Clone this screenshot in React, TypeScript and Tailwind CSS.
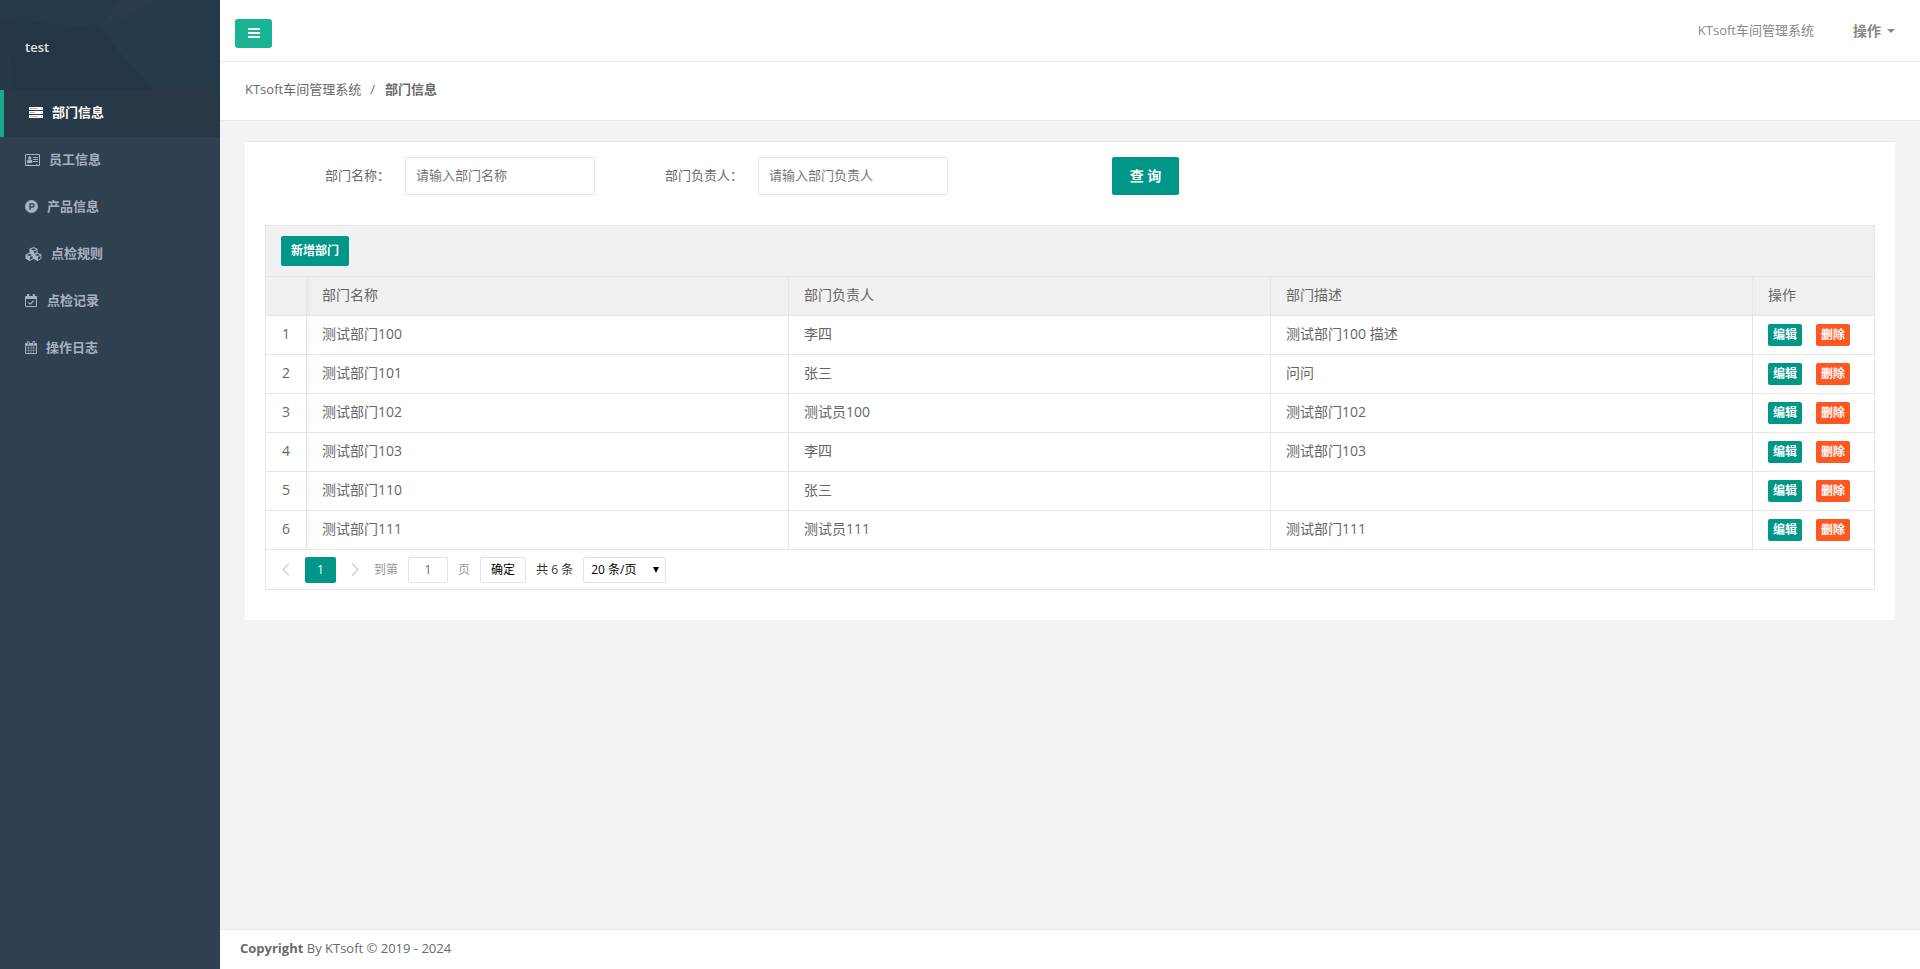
import { useState } from "react";
import type { ReactNode } from "react";

interface Department {
  name: string;
  leader: string;
  description: string;
}

interface MenuItem {
  label: string;
  icon: ReactNode;
}

const departments: Department[] = [
  { name: "测试部门100", leader: "李四", description: "测试部门100 描述" },
  { name: "测试部门101", leader: "张三", description: "问问" },
  { name: "测试部门102", leader: "测试员100", description: "测试部门102" },
  { name: "测试部门103", leader: "李四", description: "测试部门103" },
  { name: "测试部门110", leader: "张三", description: "" },
  { name: "测试部门111", leader: "测试员111", description: "测试部门111" },
];

function ServerIcon() {
  return (
    <svg width="14" height="11" viewBox="0 0 14 11" fill="currentColor" aria-hidden="true">
      <path d="M0 0h14v3H0zM0 4h14v3H0zM0 8h14v3H0z" />
      <path d="M1 1h8v1H1zM1 5h5v1H1zM1 9h8v1H1zM12 1h1v1h-1zM12 5h1v1h-1zM12 9h1v1h-1z" fill="#293846" opacity="0.35" />
    </svg>
  );
}

function AddressCardIcon() {
  return (
    <svg width="15" height="12" viewBox="0 0 15 12" fill="currentColor" aria-hidden="true">
      <path
        fillRule="evenodd"
        d="M1 0h13a1 1 0 0 1 1 1v10a1 1 0 0 1-1 1H1a1 1 0 0 1-1-1V1a1 1 0 0 1 1-1zM1 1v10h1.500v-.7h1.500v.7h7v-.7h1.500v.7H14V1z"
      />
      <circle cx="4.700" cy="4" r="1.700" />
      <path d="M2 9c0-2.500.8-3.500 1.300-3.500.8.600 2 .6 2.800 0 .6 0 1.400 1 1.400 3.500zM8 3h5v1H8zM8 5h5v1H8zM8 7h5v1H8z" />
    </svg>
  );
}

function ProductIcon() {
  return (
    <svg width="13" height="13" viewBox="0 0 13 13" fill="currentColor" aria-hidden="true">
      <path
        fillRule="evenodd"
        d="M6.500 0a6.500 6.500 0 1 1 0 13 6.500 6.500 0 0 1 0-13zM4.400 3.200v6.600h1.300v-2h1.700a2.300 2.300 0 0 0 0-4.600zM5.700 4.500h1.700a1 1 0 0 1 0 2H5.700z"
      />
    </svg>
  );
}

function CubesIcon() {
  return (
    <svg width="17" height="14" viewBox="0 0 17 14" fill="currentColor" aria-hidden="true">
      <path
        fillRule="evenodd"
        d="M8.500 0l4 1.700v4l4 1.800v4.300L12.500 14l-4-2-4 2-4-2.200V7.500l4-1.800v-4zM8.500 1.200L5.900 2.300l2.600 1.100 2.600-1.100zM9 4.300v2.200l2.500-1.100V3.200zM4.500 6.900L1.900 8l2.600 1.100L7.100 8zM5 10v2.600l2.500-1.200V9zM12.500 6.900L9.900 8l2.600 1.100L15.100 8zM13 10v2.600l2.500-1.200V9z"
      />
    </svg>
  );
}

function CalendarCheckIcon() {
  return (
    <svg width="13" height="13" viewBox="0 0 13 13" fill="currentColor" aria-hidden="true">
      <path
        fillRule="evenodd"
        d="M1 2h1V1a1 1 0 0 1 2.200 0v1h3.600V1A1 1 0 0 1 10 1v1h1a1 1 0 0 1 1 1v9a1 1 0 0 1-1 1H1a1 1 0 0 1-1-1V3a1 1 0 0 1 1-1zM1 5v7h10V5z"
      />
      <path d="M3.300 8.300l1.900 1.900 3.600-3.600" fill="none" stroke="currentColor" strokeWidth="1.200" />
    </svg>
  );
}

function CalendarIcon() {
  return (
    <svg width="12" height="13" viewBox="0 0 1664 1792" fill="currentColor" aria-hidden="true">
      <path d="M128 1664h288v-288h-288v288zm352 0h320v-288h-320v288zm-352-352h288v-320h-288v320zm352 0h320v-320h-320v320zm-352-384h288v-288h-288v288zm736 736h320v-288h-320v288zm-384-736h320v-288h-320v288zm768 736h288v-288h-288v288zm-384-352h320v-320h-320v320zm-352-864v-288q0-13-9.500-22.500t-22.500-9.500h-64q-13 0-22.500 9.500t-9.500 22.500v288q0 13 9.500 22.500t22.500 9.500h64q13 0 22.500-9.500t9.500-22.500zm736 864h288v-320h-288v320zm-384-384h320v-288h-320v288zm384 0h288v-288h-288v288zm32-480v-288q0-13-9.500-22.500t-22.500-9.500h-64q-13 0-22.500 9.500t-9.500 22.500v288q0 13 9.500 22.500t22.500 9.500h64q13 0 22.500-9.500t9.500-22.500zm384-64v1280q0 52-38 90t-90 38h-1408q-52 0-90-38t-38-90v-1280q0-52 38-90t90-38h128v-96q0-66 47-113t113-47h64q66 0 113 47t47 113v96h384v-96q0-66 47-113t113-47h64q66 0 113 47t47 113v96h128q52 0 90 38t38 90z" />
    </svg>
  );
}

const menu: MenuItem[] = [
  { label: "部门信息", icon: <ServerIcon /> },
  { label: "员工信息", icon: <AddressCardIcon /> },
  { label: "产品信息", icon: <ProductIcon /> },
  { label: "点检规则", icon: <CubesIcon /> },
  { label: "点检记录", icon: <CalendarCheckIcon /> },
  { label: "操作日志", icon: <CalendarIcon /> },
];

function Sidebar() {
  const [active, setActive] = useState(0);

  return (
    <nav className="w-[220px] shrink-0 bg-[#2f4050]">
      <div className="relative h-[90px] bg-[#263949] px-[25px] pt-[35px]">
        <svg
          className="absolute inset-0 h-full w-full"
          viewBox="0 0 220 90"
          preserveAspectRatio="none"
          aria-hidden="true"
        >
          <path d="M120 0h46L101 27z" fill="#2a3c4b" />
          <path d="M0 19l98 9 56 62H0z" fill="#243646" />
          <path d="M0 42h8l7 48H0z" fill="#263848" />
        </svg>
        <span className="relative block text-[13px] leading-6 font-semibold text-[#dfe4ed]">test</span>
      </div>
      <ul>
        {menu.map((item, i) => (
          <li
            key={item.label}
            className={i === active ? "border-l-4 border-[#19aa8d] bg-[#293846]" : ""}
          >
            <a
              href="#"
              onClick={() => setActive(i)}
              className={`flex h-[47px] items-center gap-[9px] pb-0.5 text-[13px] font-semibold ${
                i === active ? "pl-[25px] text-white" : "pl-[25px] text-[#a7b1c2]"
              }`}
            >
              {item.icon}
              {item.label}
            </a>
          </li>
        ))}
      </ul>
    </nav>
  );
}

function TopBar() {
  return (
    <header className="flex h-[62px] items-center justify-between border-b border-[#e7eaec] bg-white pr-[25px] pl-[15px]">
      <button
        aria-label="菜单"
        className="mt-[5px] flex h-[29px] w-[37px] items-center justify-center rounded-[3px] bg-[#1ab394] text-white"
      >
        <svg width="12" height="10" viewBox="0 0 12 10" fill="currentColor" aria-hidden="true">
          <path d="M0 0h12v2H0zM0 4h12v2H0zM0 8h12v2H0z" />
        </svg>
      </button>
      <div className="flex items-center gap-[39px] text-[13px] text-[#888888]">
        <span>KTsoft车间管理系统</span>
        <button className="flex items-center gap-[6px] text-sm font-semibold text-[#888888]">
          操作
          <svg width="8" height="4" viewBox="0 0 8 4" fill="currentColor" aria-hidden="true">
            <path d="M0 0h8L4 4z" />
          </svg>
        </button>
      </div>
    </header>
  );
}

function SearchForm() {
  const inputClass =
    "h-[38px] w-[190px] rounded-xs border border-[#e6e6e6] bg-white px-[10px] pb-0.5 text-[13px] placeholder:text-[#757575]";

  return (
    <form className="flex h-[38px] items-center" onSubmit={(e) => e.preventDefault()}>
      <label htmlFor="dept-name" className="w-[140px] pr-[15px] text-right">
        部门名称：
      </label>
      <input id="dept-name" placeholder="请输入部门名称" className={inputClass} />
      <label htmlFor="dept-leader" className="w-[163px] pr-[15px] text-right">
        部门负责人：
      </label>
      <input id="dept-leader" placeholder="请输入部门负责人" className={inputClass} />
      <button className="ml-[164px] h-[38px] w-[67px] rounded-xs bg-[#009688] text-sm font-semibold text-white">
        查 询
      </button>
    </form>
  );
}

function DepartmentTable() {
  const cell =
    "h-[39px] border-r border-b border-[#e6e6e6] px-[15px] pb-0.5 text-left font-normal last:border-r-0";
  // the shadow may only fall to the right of the fixed number column
  const numberCell =
    "h-[39px] border-r border-b border-[#e6e6e6] pb-0.5 text-center font-normal shadow-[0_0_8px_rgba(0,0,0,0.08)] [clip-path:inset(0_-10px_0_0)]";
  const rowButton = "h-[22px] w-[34px] rounded-xs text-xs font-semibold text-white";

  return (
    <table className="w-full table-fixed border-separate border-spacing-0 text-sm leading-7">
      <colgroup>
        <col className="w-[41px]" />
        <col />
        <col />
        <col />
        <col className="w-[121px]" />
      </colgroup>
      <thead>
        <tr className="bg-[#f1f1f1]">
          <th className={numberCell} />
          <th className={cell}>部门名称</th>
          <th className={cell}>部门负责人</th>
          <th className={cell}>部门描述</th>
          <th className={cell}>操作</th>
        </tr>
      </thead>
      <tbody>
        {departments.map((dept, i) => (
          <tr key={dept.name}>
            <td className={numberCell}>{i + 1}</td>
            <td className={cell}>{dept.name}</td>
            <td className={cell}>{dept.leader}</td>
            <td className={cell}>{dept.description}</td>
            <td className={cell}>
              <div className="flex gap-[14px] pt-0.5">
                <button className={`${rowButton} bg-[#009688]`}>编辑</button>
                <button className={`${rowButton} bg-[#ff5722]`}>删除</button>
              </div>
            </td>
          </tr>
        ))}
      </tbody>
    </table>
  );
}

function Pagination() {
  return (
    <div className="flex h-[39px] items-center pl-[14px] text-xs text-[#333333]">
      <button aria-label="上一页" className="flex w-3 justify-center text-[#d2d2d2]">
        <svg width="8" height="13" viewBox="0 0 8 13" fill="none" stroke="currentColor" strokeWidth="1.500">
          <path d="M7 .5l-6 6 6 6" />
        </svg>
      </button>
      <button className="ml-[13px] h-[26px] w-[31px] rounded-xs bg-[#009688] text-white">1</button>
      <button aria-label="下一页" className="ml-[13px] flex w-3 justify-center text-[#d2d2d2]">
        <svg width="8" height="13" viewBox="0 0 8 13" fill="none" stroke="currentColor" strokeWidth="1.500">
          <path d="M1 .5l6 6-6 6" />
        </svg>
      </button>
      <label htmlFor="page-no" className="ml-[13px] text-[#999999]">
        到第
      </label>
      <input
        id="page-no"
        defaultValue="1"
        className="mx-[10px] h-[26px] w-10 rounded-xs border border-[#e2e2e2] bg-white text-center text-[#666666]"
      />
      <span className="text-[#999999]">页</span>
      <button className="ml-[10px] h-[26px] w-[46px] rounded-xs border border-[#e2e2e2] bg-white text-black">
        确定
      </button>
      <span className="ml-[10px]">共 6 条</span>
      <div className="relative ml-[10px]">
        <select
          aria-label="每页条数"
          className="h-[26px] w-[83px] appearance-none rounded-xs border border-[#e2e2e2] bg-white pl-[7px] text-black"
        >
          <option>20 条/页</option>
          <option>50 条/页</option>
        </select>
        <svg className="absolute top-[10px] right-[7px]" width="6" height="6" viewBox="0 0 6 6">
          <path d="M0 0h6L3 6z" />
        </svg>
      </div>
    </div>
  );
}

export default function App() {
  return (
    <div className="flex min-h-screen bg-[#f3f3f4] font-['Open_Sans','Noto_Sans_CJK_SC',sans-serif] text-[13px] text-[#676a6c]">
      <Sidebar />
      <div className="flex min-w-0 flex-1 flex-col">
        <TopBar />
        <div className="flex h-[59px] items-center border-b border-[#e7eaec] bg-white px-[25px] pb-0.5">
          <a href="#">KTsoft车间管理系统</a>
          <span className="px-[9px]">/</span>
          <strong className="pl-px font-semibold">部门信息</strong>
        </div>
        <main className="flex-1 px-[25px] py-5">
          <section className="border-t border-[#e7eaec] bg-white px-5 pt-[15px] pb-[30px]">
            <SearchForm />
            <div className="mt-[30px] border border-[#e6e6e6] text-[#666666]">
              <div className="flex h-[51px] items-center border-b border-[#e6e6e6] bg-[#f1f1f1] px-[15px]">
                <button className="h-[30px] w-[68px] rounded-xs bg-[#009688] text-xs font-semibold text-white">
                  新增部门
                </button>
              </div>
              <DepartmentTable />
              <Pagination />
            </div>
          </section>
        </main>
        <footer className="border-t border-[#e7eaec] bg-white px-5 pt-2 pb-[11px] leading-5">
          <strong>Copyright</strong> By KTsoft © 2019 - 2024
        </footer>
      </div>
    </div>
  );
}
